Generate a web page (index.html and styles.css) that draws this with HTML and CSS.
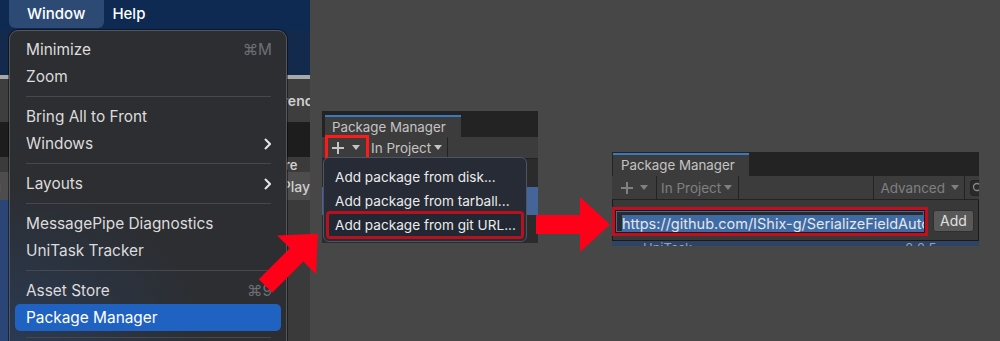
FILE: index.html
```html
<!DOCTYPE html>
<html lang="en">
<head>
    <meta charset="UTF-8">
    <meta name="viewport" content="width=device-width, initial-scale=1.0">
    <title>Add package from git URL</title>
    <link rel="stylesheet" href="styles.css">
</head>
<body>
<div class="stage">

    <!-- step 1: macOS Window menu -->
    <div class="shot shot-mac">
        <div class="menubar">
            <span class="menubar-item active">Window</span>
            <span class="menubar-item">Help</span>
        </div>
        <div class="editor">
            <div class="strip strip-desk"></div>
            <div class="strip strip-edge"></div>
            <div class="strip strip-tabs"><span>Reference</span></div>
            <div class="strip strip-view"></div>
            <div class="strip strip-bar"><span>Store</span></div>
            <div class="strip strip-play"><span class="cut"><span>Menu</span></span><span class="far">Play</span></div>
            <div class="strip strip-rest"></div>
        </div>
        <div class="mac-menu">
            <div class="mi">Minimize<span class="key">⌘M</span></div>
            <div class="mi">Zoom</div>
            <div class="msep"></div>
            <div class="mi">Bring All to Front</div>
            <div class="mi">Windows<svg class="chev" width="7" height="12" viewBox="0 0 7 12"><path d="M1 1l5 5-5 5"/></svg></div>
            <div class="msep"></div>
            <div class="mi">Layouts<svg class="chev" width="7" height="12" viewBox="0 0 7 12"><path d="M1 1l5 5-5 5"/></svg></div>
            <div class="msep"></div>
            <div class="mi">MessagePipe Diagnostics</div>
            <div class="mi">UniTask Tracker</div>
            <div class="msep"></div>
            <div class="mi">Asset Store<span class="key">⌘9</span></div>
            <div class="mi selected">Package Manager</div>
            <div class="msep"></div>
        </div>
    </div>

    <!-- step 2: the + menu -->
    <div class="shot shot-pm">
        <div class="pm-tabs"><div class="pm-tab">Package Manager</div></div>
        <div class="pm-toolbar">
            <div class="tb-btn tb-plus marked">
                <svg class="plus" width="12" height="12" viewBox="0 0 12 12"><path d="M6 0v12M0 6h12"/></svg>
                <svg class="caret" width="8" height="5" viewBox="0 0 8 5"><path d="M0 0h8L4 5z"/></svg>
            </div>
            <div class="tb-btn tb-scope">In Project<svg class="caret" width="8" height="5" viewBox="0 0 8 5"><path d="M0 0h8L4 5z"/></svg></div>
        </div>
        <div class="pm-list">
            <div class="pm-row"></div>
            <div class="pm-row selected"></div>
            <div class="pm-row"></div>
        </div>
        <div class="add-menu">
            <div class="am-item">Add package from disk...</div>
            <div class="am-item">Add package from tarball...</div>
            <div class="am-item marked">Add package from git URL...</div>
        </div>
    </div>

    <!-- step 3: paste the URL -->
    <div class="shot shot-url">
        <div class="pm-tabs"><div class="pm-tab">Package Manager</div></div>
        <div class="pm-toolbar dim">
            <div class="tb-btn tb-plus">
                <svg class="plus" width="12" height="12" viewBox="0 0 12 12"><path d="M6 0v12M0 6h12"/></svg>
                <svg class="caret" width="8" height="5" viewBox="0 0 8 5"><path d="M0 0h8L4 5z"/></svg>
            </div>
            <div class="tb-btn tb-scope">In Project<svg class="caret" width="8" height="5" viewBox="0 0 8 5"><path d="M0 0h8L4 5z"/></svg></div>
            <div class="tb-fill"></div>
            <div class="tb-btn tb-adv">Advanced<svg class="caret" width="8" height="5" viewBox="0 0 8 5"><path d="M0 0h8L4 5z"/></svg></div>
            <div class="tb-search"><svg width="12" height="12" viewBox="0 0 12 12"><circle cx="5" cy="5" r="3.5"/><path d="M7.5 7.5L11 11"/></svg></div>
        </div>
        <div class="url-popup">
            <div class="url-field marked"><span class="sel">https://github.com/IShix-g/SerializeFieldAuto</span></div>
            <div class="url-add">Add</div>
        </div>
        <div class="peek-row"><span>UniTask</span><span>2.2.5</span></div>
    </div>

    <svg class="arrows" width="1000" height="341" viewBox="0 0 1000 341">
        <defs><polygon id="arrow" points="0,-9.5 44,-9.5 44,-27.5 74,0 44,27.5 44,9.5 0,9.5"/></defs>
        <use href="#arrow" transform="translate(265.5 286) rotate(-45)"/>
        <use href="#arrow" transform="translate(536 224.5)"/>
    </svg>
</div>
</body>
</html>
```

FILE: styles.css
```css
* {
    box-sizing: border-box;
}
body {
    margin: 0;
    background-color: #474747;
    font-family: 'Inter', 'Noto Sans', sans-serif;
}
.stage {
    position: relative;
    display: flex;
    align-items: flex-start;
    width: 1000px;
    height: 341px;
    overflow: hidden;
}
.shot {
    flex: none;
    position: relative;
    overflow: hidden;
}

/* ---- macOS menu shot ---- */
.shot-mac {
    width: 310px;
    height: 341px;
    display: flex;
    flex-direction: column;
    background: #3a3a3a;
}
.menubar {
    height: 30px;
    flex: none;
    display: flex;
    padding-left: 9px;
    background: #0e2a52;
    color: #fff;
    font-size: 15px;
    font-weight: 500;
}
.menubar-item {
    height: 28px;
    line-height: 28px;
    padding: 0 18px;
}
.menubar-item.active {
    background: #2c4a74;
    border-radius: 0 0 6px 6px;
    padding-right: 19px;
}
.menubar-item + .menubar-item {
    margin-left: 8px;
    padding: 0;
}
.editor {
    flex: 1;
    display: flex;
    flex-direction: column;
}
.strip {
    flex: none;
    display: flex;
    align-items: center;
    white-space: nowrap;
    font-size: 14px;
    font-weight: 600;
    color: #cfcfcf;
}
.strip-desk { height: 45px; background: #132a4c; }
.strip-edge { height: 4px; background: #a9a9a9; }
.strip-tabs { height: 43px; background: #3e3e3e; padding-left: 252px; }
.strip-view { height: 35px; background: #1d1d1d; }
.strip-bar { height: 15px; background: #3b3b3b; padding-left: 264px; font-size: 13px; }
.strip-play { height: 28px; background: #4d4d4d; font-weight: 500; }
.strip-play .cut {
    width: 8px;
    display: flex;
    justify-content: flex-end;
    overflow: hidden;
}
.strip-play .far { margin-left: 281px; }
.strip-rest {
    flex: 1;
    background: linear-gradient(90deg, #2b4676 0, #2b4676 9px, #3a3a3a 9px);
}

.mac-menu {
    position: absolute;
    left: 9px;
    top: 30px;
    width: 278px;
    height: 330px;
    padding: 5px 0;
    background:
        radial-gradient(ellipse 200px 170px at 0 100%, rgba(40, 72, 122, 0.5), rgba(40, 72, 122, 0)),
        #2c2e32;
    border: 1px solid #55575b;
    border-radius: 9px;
    box-shadow: 0 0 0 1px rgba(0, 0, 0, 0.45);
    color: #dcdcdc;
    font-size: 15.4px;
}
.mi {
    height: 27px;
    margin: 0 5px;
    padding: 0 9px 0 11px;
    display: flex;
    align-items: center;
    justify-content: space-between;
    border-radius: 5px;
}
.mi.selected {
    background: #1f62c2;
    color: #fff;
}
.key {
    color: #6d6e72;
}
.chev {
    margin-right: 1px;
    fill: none;
    stroke: #e6e6e6;
    stroke-width: 2;
}
.msep {
    height: 13px;
    margin: 0 15px 0 16px;
    background: linear-gradient(#46484c, #46484c) center / 100% 1px no-repeat;
}

/* ---- Unity package manager shots ---- */
.pm-tabs {
    display: flex;
    background: #232323;
}
.pm-tab {
    width: 136px;
    border-top: 2px solid #3a79bb;
    background: #3c3c3c;
    color: #c4c4c4;
    font-size: 13.3px;
    line-height: 20px;
}
.pm-toolbar {
    display: flex;
    height: 22px;
    background: #3c3c3c;
    border-bottom: 1px solid #232323;
    color: #c4c4c4;
    font-size: 13.5px;
}
.tb-btn {
    display: flex;
    align-items: center;
    border-right: 1px solid #232323;
}
.plus {
    fill: none;
    stroke: #c4c4c4;
    stroke-width: 2;
}
.caret {
    fill: #c4c4c4;
}
.marked {
    outline: 3px solid #ff1a1a;
    outline-offset: -1px;
}

.shot-pm {
    width: 216px;
    height: 132px;
    margin: 111px 0 0 12px;
    background: #2b2b2b;
}
.shot-pm .pm-tabs {
    height: 26px;
    padding: 4px 0 0 3px;
}
.shot-pm .pm-tab {
    padding-left: 7px;
}
.shot-pm .pm-toolbar {
    padding-left: 5px;
}
.shot-pm .tb-plus {
    gap: 8px;
    padding: 0 6px 0 5px;
}
.shot-pm .tb-scope {
    gap: 3px;
    padding: 0 5px 0 4px;
}
.pm-row {
    height: 28px;
}
.pm-row.selected {
    background: #44649a;
}
.add-menu {
    position: absolute;
    left: 1px;
    top: 46px;
    width: 204px;
    height: 85px;
    padding-top: 7px;
    background: #262b36;
    border: 1px solid #4d5466;
    border-radius: 6px;
    color: #ececec;
    font-size: 13.6px;
}
.am-item {
    height: 24px;
    line-height: 24px;
    margin: 0 4px;
    padding-left: 7px;
    white-space: nowrap;
}
.am-item.marked {
    outline-color: #b5121e;
    border-radius: 2px;
    background: #222833;
}

.shot-url {
    width: 367px;
    height: 94px;
    margin: 152px 0 0 74px;
    background: #2b2b2b;
}
.shot-url .pm-tabs {
    height: 24px;
    padding: 1px 0 0 1px;
}
.shot-url .pm-tab {
    padding-left: 8px;
}
.shot-url .pm-toolbar {
    height: 24px;
}
.pm-toolbar.dim {
    color: #808080;
}
.dim .plus { stroke: #808080; }
.dim .caret { fill: #808080; }
.shot-url .tb-plus {
    gap: 7px;
    padding: 0 8px 0 9px;
}
.shot-url .tb-scope {
    gap: 3px;
    padding: 0 6px 0 4px;
}
.tb-fill {
    flex: 1;
}
.tb-adv {
    gap: 6px;
    padding: 0 5px 0 6px;
    border-left: 1px solid #232323;
}
.tb-search {
    width: 9px;
    height: 16px;
    margin: 4px 0 0 5px;
    border: 1px solid #232323;
    border-right: none;
    border-radius: 4px 0 0 4px;
    background: #2a2a2a;
    overflow: hidden;
}
.tb-search svg {
    display: block;
    margin: 1px 0 0 1px;
    fill: none;
    stroke: #8a8a8a;
    stroke-width: 1.3;
}
.url-popup {
    display: flex;
    align-items: flex-start;
    height: 41px;
    padding: 10px 0 0 2px;
    background: #383838;
    border: 1px solid #1a1a1a;
    border-top: none;
}
.url-field {
    width: 310px;
    height: 23px;
    padding: 2px 1px 0 6px;
    background: #2a2a2a;
    border: 1px solid #1a1a1a;
    box-shadow: inset 0 0 0 1px #3f6aa0;
    overflow: hidden;
    white-space: nowrap;
    outline-color: #c01020;
    outline-offset: 0;
}
.sel {
    display: inline-block;
    line-height: 17px;
    background: #3e6ba6;
    color: #e6e6e6;
    font-size: 14.5px;
}
.url-add {
    width: 41px;
    height: 22px;
    margin-left: 8px;
    line-height: 20px;
    text-align: center;
    background: #585858;
    border: 1px solid #303030;
    border-radius: 3px;
    color: #e0e0e0;
    font-size: 14px;
}
.peek-row {
    display: flex;
    height: 5px;
    padding: 0 0 0 31px;
    background: #2d4466;
    color: #9aa3b0;
    font-size: 13px;
    line-height: 14px;
    overflow: hidden;
}
.peek-row span + span {
    margin-left: 213px;
}

.arrows {
    position: absolute;
    left: 0;
    top: 0;
    fill: #ff0019;
    pointer-events: none;
}
```
